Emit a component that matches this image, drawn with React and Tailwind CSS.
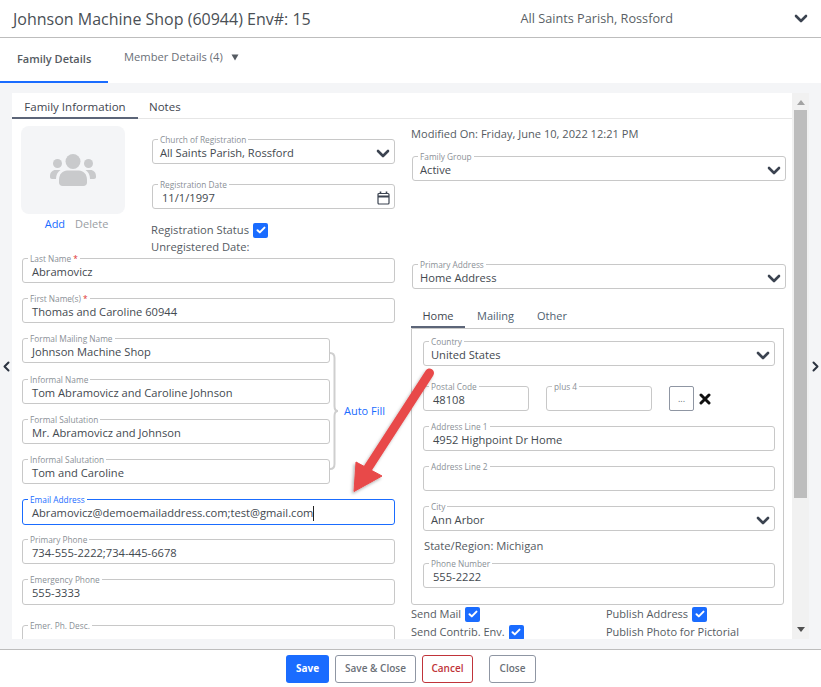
const Chevron = ({ className = '' }) => (
  <svg className={className} width="14" height="9" viewBox="0 0 14 9" fill="none" stroke="#3b4350" strokeWidth="2.6" strokeLinecap="round" strokeLinejoin="round">
    <path d="M2 2l5 5 5-5" />
  </svg>
);

const SideChevron = ({ right }) => (
  <svg width="7" height="11" viewBox="0 0 7 11" fill="none" stroke="#2b3340" strokeWidth="2" strokeLinecap="round" strokeLinejoin="round">
    <path d={right ? 'M1.5 1.5l4 4-4 4' : 'M5.5 1.5l-4 4 4 4'} />
  </svg>
);

const Check = () => (
  <span className="inline-flex items-center justify-center w-[15px] h-[15px] rounded-[2px] bg-[#1a6cff] shrink-0">
    <svg width="10" height="8" viewBox="0 0 10 8" fill="none" stroke="white" strokeWidth="2" strokeLinecap="round" strokeLinejoin="round">
      <path d="M1.5 4.2l2.3 2.2 4.7-4.8" />
    </svg>
  </span>
);

/* outlined input with the label sitting on the border */
function Field({ label, value, req, select, date, active, className = '', h = 'h-[25px]' }) {
  return (
    <div className={`relative ${h} rounded-[3px] border flex items-center justify-between ${select ? 'pl-[7px]' : 'pl-[9px]'} pr-[4px] pt-[3px] ${active ? 'border-[#1a6cff]' : 'border-[#c8c8c8]'} ${className}`}>
      <span className={`absolute -top-[6px] left-[5px] bg-white px-[2px] text-[8.3px] leading-[11px] whitespace-nowrap ${active ? 'text-[#1a6cff]' : 'text-[#8a8f96]'}`}>
        {label}{req && <span className="text-[#e03131]"> *</span>}
      </span>
      <span className="text-[11.15px] text-[#43494f] whitespace-nowrap flex items-center">
        {value}
        {active && <span className="inline-block w-px h-[15px] bg-[#222]" />}
      </span>
      {select && <Chevron />}
      {date && (
        <svg width="13" height="14" viewBox="0 0 13 14" fill="none" stroke="#3b4350" strokeWidth="1.2">
          <rect x="1" y="2.5" width="11" height="10.5" rx="1" />
          <path d="M1 5.5h11" strokeWidth="2" />
          <path d="M3.5 0.5v2M9.5 0.5v2" strokeWidth="1.6" />
        </svg>
      )}
    </div>
  );
}

const GroupIcon = () => (
  <svg width="46" height="34" viewBox="0 0 46 34" fill="#c9cacc">
    <circle cx="23" cy="8.5" r="7.5" />
    <circle cx="7.5" cy="10.5" r="4.5" />
    <circle cx="38.5" cy="10.5" r="4.5" />
    <path d="M9 27c0-6 4-9.5 8-9.5h12c4 0 8 3.500 8 9.500v2.500c0 2-1.500 3.500-3.500 3.500h-21C10.500 33 9 31.500 9 29.500z" />
    <path d="M0 23c0-3.500 2.500-6 5.500-6h5c-3 2-4.500 5-4.500 9H2c-1.200 0-2-.8-2-2z" />
    <path d="M46 23c0-3.500-2.500-6-5.500-6h-5c3 2 4.500 5 4.500 9h4c1.200 0 2-.8 2-2z" />
  </svg>
);

export default function App() {
  return (
    <div className="w-[821px] h-[687px] flex flex-col bg-white overflow-hidden relative font-['Open_Sans',sans-serif] text-[#495057]">
      {/* Header */}
      <div className="h-[38px] shrink-0 border-b border-[#bdbdbd] flex items-center pl-[13px] pr-[13px]">
        <h1 className="text-[16px] text-[#4a4f55] whitespace-nowrap">Johnson Machine Shop (60944) Env#: 15</h1>
        <span className="ml-auto mr-[121px] text-[12.7px] text-[#5a5f66] whitespace-nowrap">All Saints Parish, Rossford</span>
        <Chevron />
      </div>

      {/* Top tabs */}
      <div className="h-[45px] shrink-0 flex">
        <div className="w-[108px] h-full border-b-[2px] border-[#1a6cff] flex items-center pl-[17px] text-[11px] font-semibold text-[#555b62]">Family Details</div>
        <div className="ml-[16px] pt-[11px] flex text-[11.2px] text-[#6b7078] whitespace-nowrap leading-[16px]">
          Member Details (4)
          <svg className="ml-[8px] mt-[5px]" width="8" height="7" viewBox="0 0 8 7" fill="#555b62"><path d="M0.500 0.500h7L4 6.500z" /></svg>
        </div>
      </div>

      {/* Body */}
      <div className="flex-1 bg-[#f4f5f7] flex min-h-0">
        <div className="w-[12px] shrink-0 flex items-center justify-center"><SideChevron /></div>
        <div className="w-[780px] mt-[10px] mb-[10px] bg-white overflow-hidden flex flex-col">
          {/* Inner tabs */}
          <div className="h-[26px] shrink-0 border-b border-[#e6e6e6] flex text-[11.5px]">
            <div className="w-[126px] h-[26px] pt-[4px] border-b-[2px] border-[#5c6578] flex items-center justify-center text-[#3f4650] font-medium">Family Information</div>
            <div className="ml-[11px] h-full pt-[3px] flex items-center text-[#3f4650]">Notes</div>
          </div>

          <div className="flex flex-1 min-h-0 overflow-hidden">
            {/* Left column */}
            <div className="ml-[10px] w-[373px] shrink-0">
              <div className="flex h-[139px]">
                <div className="-ml-[1px] mt-[7px] w-[104px]">
                  <div className="h-[88px] rounded-[8px] bg-[#f4f5f7] flex items-center justify-center"><GroupIcon /></div>
                  <div className="mt-[2px] flex justify-center gap-[10px] text-[11px] leading-[16px] pl-[7px]">
                    <span className="text-[#1a6cff]">Add</span>
                    <span className="text-[#9a9ea4]">Delete</span>
                  </div>
                </div>
                <div className="ml-[27px] w-[243px]">
                  <Field className="mt-[20px]" label="Church of Registration" value="All Saints Parish, Rossford" select />
                  <Field className="mt-[20px]" label="Registration Date" value="11/1/1997" date />
                  <div className="-ml-[1px] mt-[12px] flex items-center gap-[4px] h-[18px] text-[11.2px] text-[#555b62]">Registration Status <Check /></div>
                  <div className="-ml-[1px] h-[17px] flex items-center text-[11.2px] text-[#555b62]">Unregistered Date:</div>
                </div>
              </div>

              <Field label="Last Name" req value="Abramovicz" />
              <Field className="mt-[15px]" label="First Name(s)" req value="Thomas and Caroline 60944" />

              <div className="mt-[15px] flex items-center">
                <div className="w-[308px] shrink-0">
                  <Field label="Formal Mailing Name" value="Johnson Machine Shop" />
                  <Field className="mt-[16px]" label="Informal Name" value="Tom Abramovicz and Caroline Johnson" />
                  <Field className="mt-[15px]" label="Formal Salutation" value="Mr. Abramovicz and Johnson" />
                  <Field className="mt-[15px]" label="Informal Salutation" value="Tom and Caroline" />
                </div>
                <svg className="shrink-0" width="9" height="118" viewBox="0 0 9 118" fill="none" stroke="#cfcfcf" strokeWidth="2">
                  <path d="M0 1c3 0 4.500 2 4.500 5v48c0 3 1 5 3.500 5-2.500 0-3.500 2-3.500 5v48c0 3-1.500 5-4.500 5" />
                </svg>
                <span className="ml-[5px] text-[11px] text-[#1a6cff] whitespace-nowrap">Auto Fill</span>
              </div>

              <Field className="mt-[15px]" h="h-[26px]" label="Email Address" value="Abramovicz@demoemailaddress.com;test@gmail.com" active />
              <Field className="mt-[14px]" label="Primary Phone" value="734-555-2222;734-445-6678" />
              <Field className="mt-[15px]" h="h-[26px]" label="Emergency Phone" value="555-3333" />
              <Field className="mt-[20px]" label="Emer. Ph. Desc." value="" />
            </div>

            {/* Right column */}
            <div className="ml-[16px] w-[375px] shrink-0">
              <div className="mt-[6px] h-[18px] flex items-center text-[11.1px] text-[#555b62] whitespace-nowrap">Modified On: Friday, June 10, 2022 12:21 PM</div>
              <Field className="mt-[13px] ml-px" label="Family Group" value="Active" select />
              <Field className="mt-[83px] ml-px" label="Primary Address" value="Home Address" select />

              <div className="mt-[15px] h-[24px] flex text-[11px] text-[#4f5f70]">
                <div className="w-[54px] h-[24px] pt-[2px] border-b-[2px] border-[#5c6578] flex items-center justify-center text-[#3f4650]">Home</div>
                <div className="ml-[12px] h-[24px] flex items-center">Mailing</div>
                <div className="ml-[23px] h-[24px] flex items-center">Other</div>
              </div>
              <div className="w-[373px] h-[277px] border border-[#c8c8c8] rounded-b-[3px] pl-[11px] pt-[12px]">
                <div className="w-[352px]">
                  <Field label="Country" value="United States" select />
                  <div className="mt-[20px] flex items-center">
                    <Field className="w-[106px]" label="Postal Code" value="48108" />
                    <Field className="w-[106px] ml-[17px]" label="plus 4" value="" />
                    <div className="ml-[17px] w-[25px] h-[25px] rounded-[2px] border border-[#8f96a3] flex items-center justify-center text-[9px] text-[#6b7078]">...</div>
                    <svg className="ml-[5px]" width="12" height="12" viewBox="0 0 12 12" fill="none" stroke="#111" strokeWidth="3" strokeLinecap="round">
                      <path d="M2 2l8 8M10 2l-8 8" />
                    </svg>
                  </div>
                  <Field className="mt-[15px]" label="Address Line 1" value="4952 Highpoint Dr Home" />
                  <Field className="mt-[15px]" label="Address Line 2" value="" />
                  <Field className="mt-[15px]" label="City" value="Ann Arbor" select />
                  <div className="mt-[6px] h-[18px] flex items-center pl-px text-[11.2px] text-[#555b62]">State/Region: Michigan</div>
                  <Field className="mt-[8px]" label="Phone Number" value="555-2222" />
                </div>
              </div>

              <div className="grid grid-cols-[195px_1fr] text-[11px] text-[#555b62] leading-[18px]">
                <div className="h-[18px] flex items-center gap-[4px]">Send Mail <Check /></div>
                <div className="h-[18px] flex items-center gap-[4px]">Publish Address <Check /></div>
                <div className="h-[18px] flex items-center gap-[4px]">Send Contrib. Env. <Check /></div>
                <div className="h-[18px] flex items-center">Publish Photo for Pictorial</div>
              </div>
            </div>
          </div>
        </div>

        {/* Scrollbar */}
        <div className="w-[17px] shrink-0 mt-[10px] mb-[10px] bg-[#f1f1f1] flex flex-col items-center">
          <svg className="mt-[7px]" width="8" height="5" viewBox="0 0 8 5" fill="#a3a3a3"><path d="M4 0l4 5H0z" /></svg>
          <div className="mt-[5px] w-[13px] h-[388px] bg-[#bdbdbd]" />
          <svg className="mt-auto mb-[7px]" width="8" height="5" viewBox="0 0 8 5" fill="#505050"><path d="M0 0h8L4 5z" /></svg>
        </div>
        <div className="flex-1 flex items-center justify-center"><SideChevron right /></div>
      </div>

      {/* Footer */}
      <div className="h-[38px] shrink-0 border-t border-[#bdbdbd] flex justify-center items-center pl-px text-[10px] font-semibold">
        <button className="w-[43px] h-[28px] rounded-[3px] bg-[#1a6cff] text-white font-bold">Save</button>
        <button className="ml-[6px] w-[81px] h-[28px] rounded-[3px] border border-[#8f96a3] text-[#6b7078]">Save &amp; Close</button>
        <button className="ml-[6px] w-[51px] h-[28px] rounded-[3px] border border-[#c0343a] text-[#c0343a]">Cancel</button>
        <button className="ml-[16px] w-[47px] h-[28px] rounded-[3px] border border-[#8f96a3] text-[#6b7078]">Close</button>
      </div>

      {/* Annotation arrow over the form */}
      <svg className="absolute left-[340px] top-[360px] pointer-events-none" width="110" height="140" viewBox="340 360 110 140">
        <defs>
          <filter id="arrowShadow" x="-20%" y="-20%" width="140%" height="140%">
            <feDropShadow dx="-1.500" dy="2" stdDeviation="1.500" floodColor="#000" floodOpacity="0.3" />
          </filter>
        </defs>
        <g filter="url(#arrowShadow)" fill="#e8494a" stroke="#e8494a">
          <path d="M429.500 373L368 468" strokeWidth="9" strokeLinecap="round" fill="none" />
          <path d="M354 491.500L356 462L382 476z" strokeWidth="1" />
        </g>
      </svg>
    </div>
  );
}
